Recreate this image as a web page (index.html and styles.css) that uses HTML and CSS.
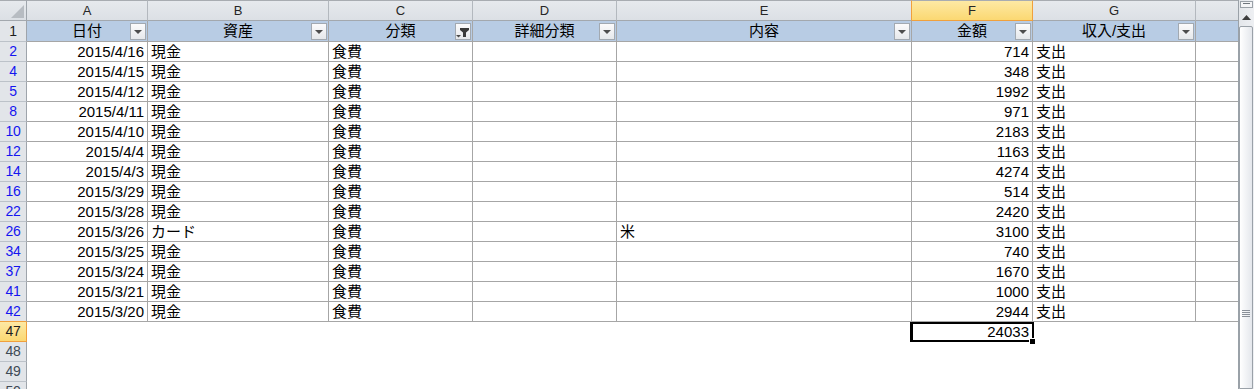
FILE: index.html
```html
<!DOCTYPE html>
<html lang="ja">
<head>
<meta charset="utf-8">
<title>Sheet</title>
<link rel="stylesheet" href="styles.css">
</head>
<body>
<div class="window">
  <div class="sheet">
    <div class="row colhead">
      <div class="corner"><svg width="13" height="13" viewBox="0 0 13 13"><polygon points="13,0 13,13 0,13" fill="#b7bcc2"/></svg></div>
      <div class="ch">A</div>
      <div class="ch">B</div>
      <div class="ch">C</div>
      <div class="ch">D</div>
      <div class="ch pre-sel">E</div>
      <div class="ch sel">F</div>
      <div class="ch">G</div>
      <div class="ch last"></div>
    </div>
    <div class="row thead">
      <div class="rn dark">1</div>
      <div class="th">日付<span class="fbtn"><span class="arrow"></span></span></div>
      <div class="th">資産<span class="fbtn"><span class="arrow"></span></span></div>
      <div class="th">分類<span class="fbtn"><svg width="14" height="15" viewBox="0 0 14 15"><polygon points="0,11 5,11 2.5,13.5" fill="#4a4a4a"/><polygon points="4,4 13,4 13,6 10,8.5 10,13 7,13 7,8.5 4,6" fill="#3a3a3a"/></svg></span></div>
      <div class="th">詳細分類<span class="fbtn"><span class="arrow"></span></span></div>
      <div class="th">内容<span class="fbtn"><span class="arrow"></span></span></div>
      <div class="th">金額<span class="fbtn"><span class="arrow"></span></span></div>
      <div class="th">収入/支出<span class="fbtn"><span class="arrow"></span></span></div>
      <div class="th last"></div>
    </div>

    <div class="row data"><div class="rn">2</div><div class="c r">2015/4/16</div><div class="c">現金</div><div class="c">食費</div><div class="c"></div><div class="c"></div><div class="c r">714</div><div class="c">支出</div><div class="c last"></div></div>
    <div class="row data"><div class="rn">4</div><div class="c r">2015/4/15</div><div class="c">現金</div><div class="c">食費</div><div class="c"></div><div class="c"></div><div class="c r">348</div><div class="c">支出</div><div class="c last"></div></div>
    <div class="row data"><div class="rn">5</div><div class="c r">2015/4/12</div><div class="c">現金</div><div class="c">食費</div><div class="c"></div><div class="c"></div><div class="c r">1992</div><div class="c">支出</div><div class="c last"></div></div>
    <div class="row data"><div class="rn">8</div><div class="c r">2015/4/11</div><div class="c">現金</div><div class="c">食費</div><div class="c"></div><div class="c"></div><div class="c r">971</div><div class="c">支出</div><div class="c last"></div></div>
    <div class="row data"><div class="rn">10</div><div class="c r">2015/4/10</div><div class="c">現金</div><div class="c">食費</div><div class="c"></div><div class="c"></div><div class="c r">2183</div><div class="c">支出</div><div class="c last"></div></div>
    <div class="row data"><div class="rn">12</div><div class="c r">2015/4/4</div><div class="c">現金</div><div class="c">食費</div><div class="c"></div><div class="c"></div><div class="c r">1163</div><div class="c">支出</div><div class="c last"></div></div>
    <div class="row data"><div class="rn">14</div><div class="c r">2015/4/3</div><div class="c">現金</div><div class="c">食費</div><div class="c"></div><div class="c"></div><div class="c r">4274</div><div class="c">支出</div><div class="c last"></div></div>
    <div class="row data"><div class="rn">16</div><div class="c r">2015/3/29</div><div class="c">現金</div><div class="c">食費</div><div class="c"></div><div class="c"></div><div class="c r">514</div><div class="c">支出</div><div class="c last"></div></div>
    <div class="row data"><div class="rn">22</div><div class="c r">2015/3/28</div><div class="c">現金</div><div class="c">食費</div><div class="c"></div><div class="c"></div><div class="c r">2420</div><div class="c">支出</div><div class="c last"></div></div>
    <div class="row data"><div class="rn">26</div><div class="c r">2015/3/26</div><div class="c">カード</div><div class="c">食費</div><div class="c"></div><div class="c">米</div><div class="c r">3100</div><div class="c">支出</div><div class="c last"></div></div>
    <div class="row data"><div class="rn">34</div><div class="c r">2015/3/25</div><div class="c">現金</div><div class="c">食費</div><div class="c"></div><div class="c"></div><div class="c r">740</div><div class="c">支出</div><div class="c last"></div></div>
    <div class="row data"><div class="rn">37</div><div class="c r">2015/3/24</div><div class="c">現金</div><div class="c">食費</div><div class="c"></div><div class="c"></div><div class="c r">1670</div><div class="c">支出</div><div class="c last"></div></div>
    <div class="row data"><div class="rn">41</div><div class="c r">2015/3/21</div><div class="c">現金</div><div class="c">食費</div><div class="c"></div><div class="c"></div><div class="c r">1000</div><div class="c">支出</div><div class="c last"></div></div>
    <div class="row data"><div class="rn pre-sel-row">42</div><div class="c r">2015/3/20</div><div class="c">現金</div><div class="c">食費</div><div class="c"></div><div class="c"></div><div class="c r">2944</div><div class="c">支出</div><div class="c last"></div></div>

    <div class="row empty"><div class="rn dark sel-row">47</div><div class="e"></div><div class="e"></div><div class="e"></div><div class="e"></div><div class="e"></div><div class="e r active">24033</div><div class="e"></div><div class="e"></div></div>
    <div class="row empty"><div class="rn gray">48</div><div class="e"></div><div class="e"></div><div class="e"></div><div class="e"></div><div class="e"></div><div class="e"></div><div class="e"></div><div class="e"></div></div>
    <div class="row empty"><div class="rn gray">49</div><div class="e"></div><div class="e"></div><div class="e"></div><div class="e"></div><div class="e"></div><div class="e"></div><div class="e"></div><div class="e"></div></div>
    <div class="row empty"><div class="rn gray">50</div><div class="e"></div><div class="e"></div><div class="e"></div><div class="e"></div><div class="e"></div><div class="e"></div><div class="e"></div><div class="e"></div></div>
  </div>
  <div class="vscroll">
    <div class="split"><span></span></div>
    <div class="up"><svg width="9" height="5" viewBox="0 0 9 5"><polygon points="0,5 9,5 4.5,0" fill="#3d3d3d"/></svg></div>
    <div class="thumb"><div class="grip"><i></i><i></i><i></i><i></i></div></div>
  </div>
</div>
</body>
</html>
```

FILE: styles.css
```css
* { box-sizing: border-box; }
html, body {
  margin: 0;
  padding: 0;
  background: #ffffff;
  overflow: hidden;
}
body {
  font-family: "Liberation Sans", "Noto Sans CJK JP", sans-serif;
  width: 1254px;
  height: 389px;
}
.window {
  display: flex;
  width: 1254px;
  height: 389px;
  overflow: hidden;
}
.sheet {
  width: 1238px;
  display: flex;
  flex-direction: column;
}
.row {
  display: grid;
  grid-template-columns: 27px 121px 181px 144px 144px 295px 121px 163px 42px;
  flex: none;
}
.colhead { height: 21px; }
.thead { height: 21px; }
.data, .empty { height: 20px; }

/* column header */
.corner, .ch {
  background: linear-gradient(#e6e9ed, #dce0e5);
  border-top: 1px solid #a8acb1;
  border-bottom: 1px solid #a3a8ae;
  border-right: 1px solid #b3b8be;
}
.corner {
  display: flex;
  align-items: flex-end;
  justify-content: flex-end;
  padding: 0 2px 2px 0;
  border-right-color: #9ea4ab;
}
.ch {
  font-size: 13px;
  line-height: 19px;
  text-align: center;
  color: #262626;
}
.ch.last { border-right: none; }
.ch.pre-sel { border-right-color: #f0a03d; }
.ch.sel {
  background: linear-gradient(#fde9a4, #fbd872);
  border-right-color: #f0a03d;
  border-bottom-color: #f0a03d;
}

/* row numbers */
.rn {
  background: #e2e5e9;
  border-right: 1px solid #9ea4ab;
  border-bottom: 1px solid #bcc2c9;
  font-size: 14px;
  line-height: 19px;
  text-align: center;
  color: #1515f0;
  letter-spacing: -0.3px;
}
.thead .rn { line-height: 20px; }
.rn.dark { color: #1e1e1e; }
.rn.gray { color: #404a55; }
.rn.pre-sel-row { border-bottom-color: #f0a03d; }
.rn.sel-row {
  background: linear-gradient(#fde9a4, #fbd872);
  border-right-color: #f0a03d;
  border-bottom-color: #f0a03d;
}

/* table header */
.th {
  position: relative;
  background: #b8cce4;
  border-right: 1px solid #a6a6a6;
  border-bottom: 1px solid #a6a6a6;
  font-size: 15px;
  line-height: 20px;
  text-align: center;
  color: #000;
}
.th.last { border-right: none; }
.fbtn {
  position: absolute;
  right: 1px;
  top: 2px;
  width: 16px;
  height: 17px;
  border: 1px solid #a2a9b1;
  background: linear-gradient(#fbfbfc, #e6e8eb);
  display: flex;
  align-items: center;
  justify-content: center;
}
.arrow {
  width: 0;
  height: 0;
  border-left: 4px solid transparent;
  border-right: 4px solid transparent;
  border-top: 4px solid #4d4d4d;
  margin-top: 1px;
}

/* data cells */
.c, .e {
  font-size: 15px;
  line-height: 19px;
  color: #000;
  padding: 0 3px;
  white-space: nowrap;
  overflow: visible;
}
.c {
  border-right: 1px solid #a6a6a6;
  border-bottom: 1px solid #a6a6a6;
}
.c.last { border-right: none; }
.r { text-align: right; }

.active { position: relative; padding-right: 4px; }
.active::before {
  content: "";
  position: absolute;
  left: -2px;
  right: -1px;
  top: 0;
  bottom: 0;
  border: 2px solid #000;
  border-left-width: 3px;
}
.active::after {
  content: "";
  position: absolute;
  right: -2px;
  bottom: -2px;
  width: 5px;
  height: 5px;
  background: #000;
  outline: 1px solid #fff;
}

/* vertical scrollbar */
.vscroll {
  width: 16px;
  border-left: 1px solid #9aa1a8;
  background: linear-gradient(90deg, #e3e6ea, #eef0f3);
  display: flex;
  flex-direction: column;
}
.split {
  height: 9px;
  padding: 1px 1px 0 1px;
}
.split span {
  display: block;
  height: 7px;
  border: 1px solid #9aa1a8;
  background: #f4f5f7;
  position: relative;
}
.split span::after {
  content: "";
  display: block;
  margin: 1px 2px 0;
  height: 1px;
  background: #6f767d;
}
.up {
  height: 17px;
  display: flex;
  align-items: center;
  justify-content: center;
}
.thumb {
  flex: 1;
  margin-right: 1px;
  border: 1px solid #9aa1a8;
  border-radius: 2px 2px 0 0;
  background: linear-gradient(90deg, #ffffff, #e4e7ec);
  padding-top: 283px;
}
.grip {
  display: flex;
  flex-direction: column;
  gap: 1px;
  align-items: center;
}
.grip i {
  display: block;
  width: 8px;
  height: 1px;
  background: #8a9098;
}
```
